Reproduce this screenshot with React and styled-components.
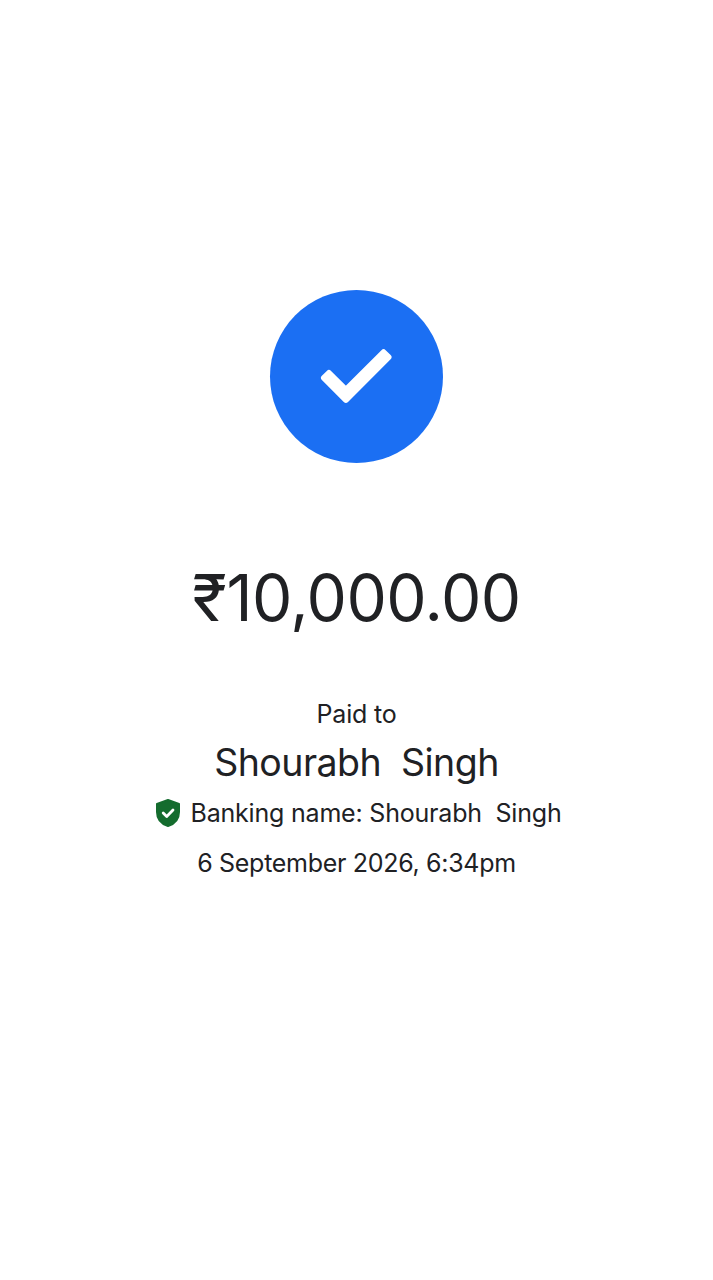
import styled, { createGlobalStyle } from "styled-components";

const GlobalStyle = createGlobalStyle`
  html, body {
    margin: 0;
    padding: 0;
    background: #fff;
  }
`;

export default function App() {
  return (
    <>
      <GlobalStyle />
      <Page>
        <Circle>
          <svg width="173" height="173" viewBox="0 0 173 173">
            <polygon
              points="113.56,62.3 118.5,67.24 75.9,109.85 54,87.94 58.94,83 75.9,99.95"
              fill="#fff"
              stroke="#fff"
              strokeWidth="6"
              strokeLinejoin="round"
            />
          </svg>
        </Circle>
        <Amount>₹10,000.00</Amount>
        <PaidTo>Paid to</PaidTo>
        <Name>Shourabh&nbsp; Singh</Name>
        <BankRow>
          <svg width="24" height="28" viewBox="0 0 24 28">
            <path
              d="M12 1 L23 5 V13 C23 20 18.5 25 12 27 C5.5 25 1 20 1 13 V5 Z"
              fill="#146c2e"
              stroke="#146c2e"
              strokeWidth="2"
              strokeLinejoin="round"
            />
            <path
              d="M7.2 14 L10.7 17.4 L17 11"
              fill="none"
              stroke="#fff"
              strokeWidth="2.8"
              strokeLinecap="round"
              strokeLinejoin="round"
            />
          </svg>
          <span>Banking name: Shourabh&nbsp; Singh</span>
        </BankRow>
        <DateLine>6 September 2026, 6:34pm</DateLine>
      </Page>
    </>
  );
}

const Page = styled.div`
  width: 713px;
  height: 1280px;
  padding-top: 290px;
  box-sizing: border-box;
  display: flex;
  flex-direction: column;
  align-items: center;
  font-family: "Inter", "Noto Sans", sans-serif;
  color: #202124;
  background: #fff;
`;

const Circle = styled.div`
  width: 173px;
  height: 173px;
  border-radius: 50%;
  background: #1b6ff3;
  display: flex;
`;

const Amount = styled.div`
  margin-top: 95px;
  font-size: 64px;
  line-height: 80px;
  letter-spacing: -0.5px;
`;

const PaidTo = styled.div`
  margin-top: 60px;
  font-size: 25px;
  line-height: 32px;
  letter-spacing: -0.2px;
`;

const Name = styled.div`
  margin-top: 8px;
  font-size: 37.5px;
  line-height: 50px;
  letter-spacing: -0.55px;
`;

const BankRow = styled.div`
  margin-top: 8px;
  padding-left: 4px;
  display: flex;
  align-items: center;
  gap: 11px;
  font-size: 25px;
  line-height: 34px;
  letter-spacing: -0.2px;
`;

const DateLine = styled.div`
  margin-top: 16px;
  font-size: 25px;
  line-height: 34px;
  letter-spacing: -0.3px;
`;
